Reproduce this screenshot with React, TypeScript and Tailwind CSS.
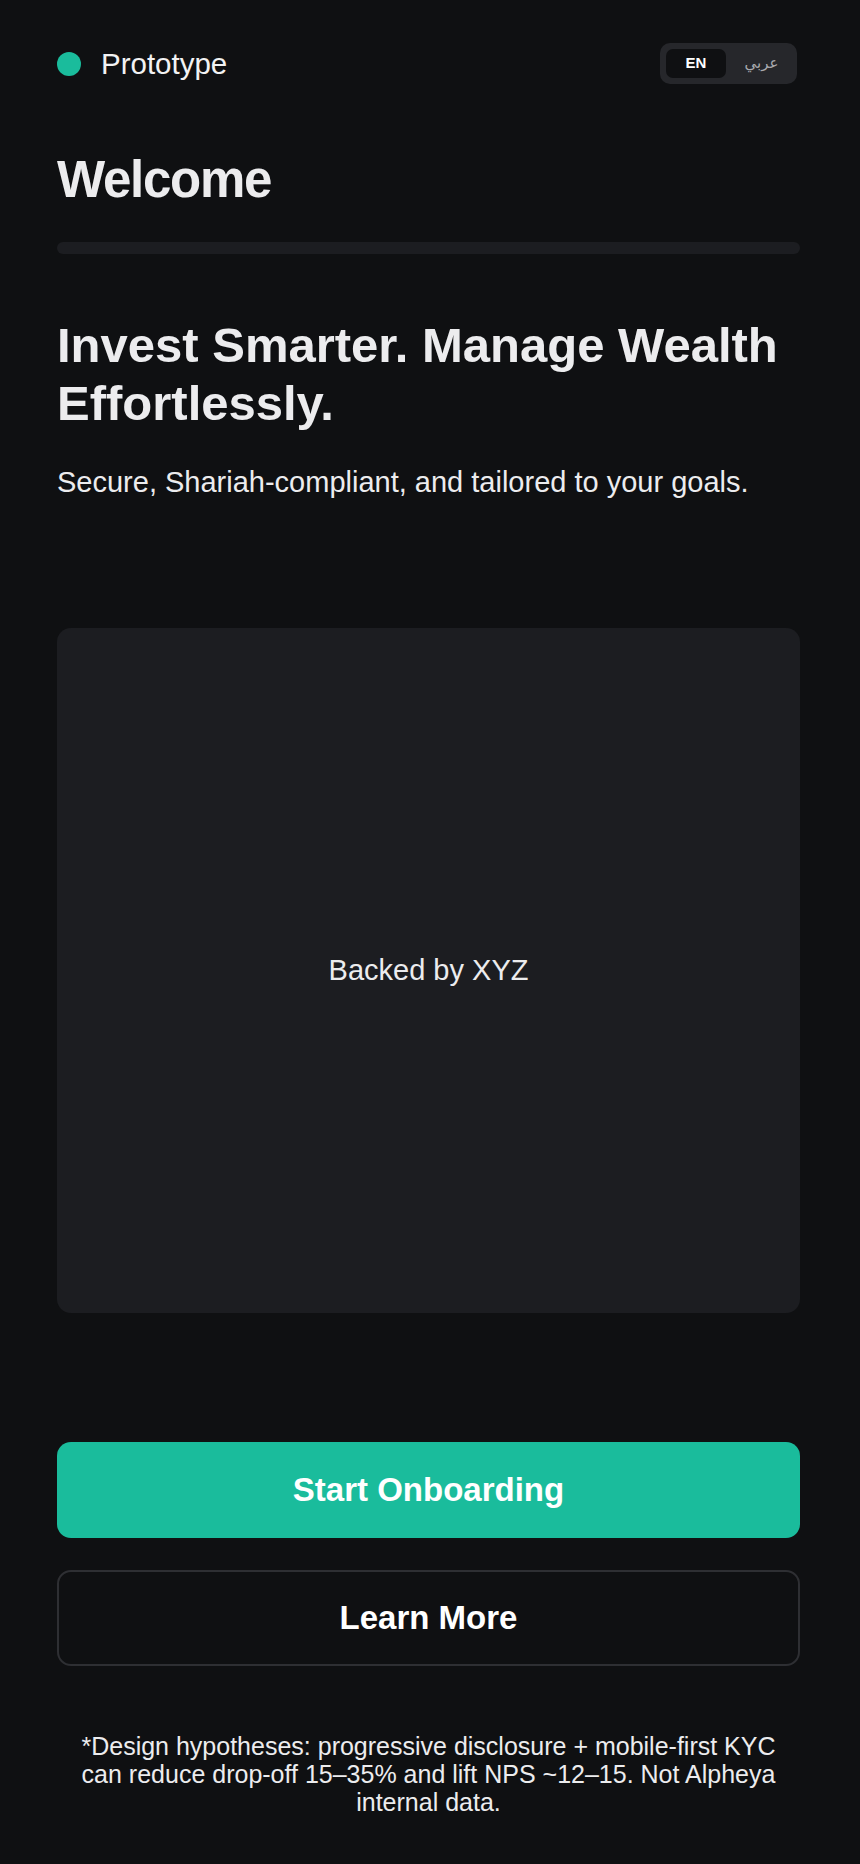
import React from "react";

export default function App() {
  return (
    <div className="min-h-screen bg-[#0f1012] text-[#ececee] font-['Liberation_Sans',Arial,sans-serif]">
      <div className="flex flex-col pl-[57px] pr-[60px] pt-[43px] pb-[48px]">
        <header className="flex h-[41px] items-center justify-between">
          <div className="flex items-center gap-[20px]">
            <span className="block h-6 w-6 rounded-full bg-[#1abc9c]" />
            <span className="text-[29.5px] leading-none text-[#f2f2f3]">Prototype</span>
          </div>
          <div className="mr-[3px] flex h-[41px] w-[137px] items-center rounded-[10px] bg-[#26272b] p-[6px]">
            <button className="flex h-[29px] w-[60px] items-center justify-center rounded-[7px] bg-[#0f1012] text-[15px] font-bold text-white">
              EN
            </button>
            <span className="flex flex-1 items-center justify-center pl-[6px] text-[15px] text-[#a9aaae] font-['DejaVu_Sans',sans-serif]">
              عربي
            </span>
          </div>
        </header>

        <h1 className="mt-[65px] text-[51px] font-bold leading-[61px] tracking-tight">Welcome</h1>

        <div className="mt-[32px] h-3 w-full rounded-full bg-[#1c1d21]" />

        <h2 className="mt-[62px] text-[49px] font-bold leading-[58px]">
          Invest Smarter. Manage Wealth Effortlessly.
        </h2>

        <p className="mt-[30px] text-[29px] leading-[40px] text-[#ececee]">
          Secure, Shariah-compliant, and tailored to your goals.
        </p>

        <div className="mt-[126px] flex h-[685px] items-center justify-center rounded-[14px] bg-[#1c1d21]">
          <span className="text-[29px] text-[#ececee]">Backed by XYZ</span>
        </div>

        <button className="mt-[129px] flex h-[96px] w-full items-center justify-center rounded-[14px] bg-[#1abc9c] text-[33px] font-bold text-white">
          Start Onboarding
        </button>

        <button className="mt-[32px] flex h-[96px] w-full items-center justify-center rounded-[14px] border-2 border-[#2e2f33] text-[33px] font-bold text-white">
          Learn More
        </button>

        <p className="mt-[66px] px-[18px] text-center text-[25px] leading-[28px] text-[#ececee]">
          *Design hypotheses: progressive disclosure + mobile-first KYC can reduce drop-off 15–35% and lift NPS ~12–15. Not Alpheya internal data.
        </p>
      </div>
    </div>
  );
}
